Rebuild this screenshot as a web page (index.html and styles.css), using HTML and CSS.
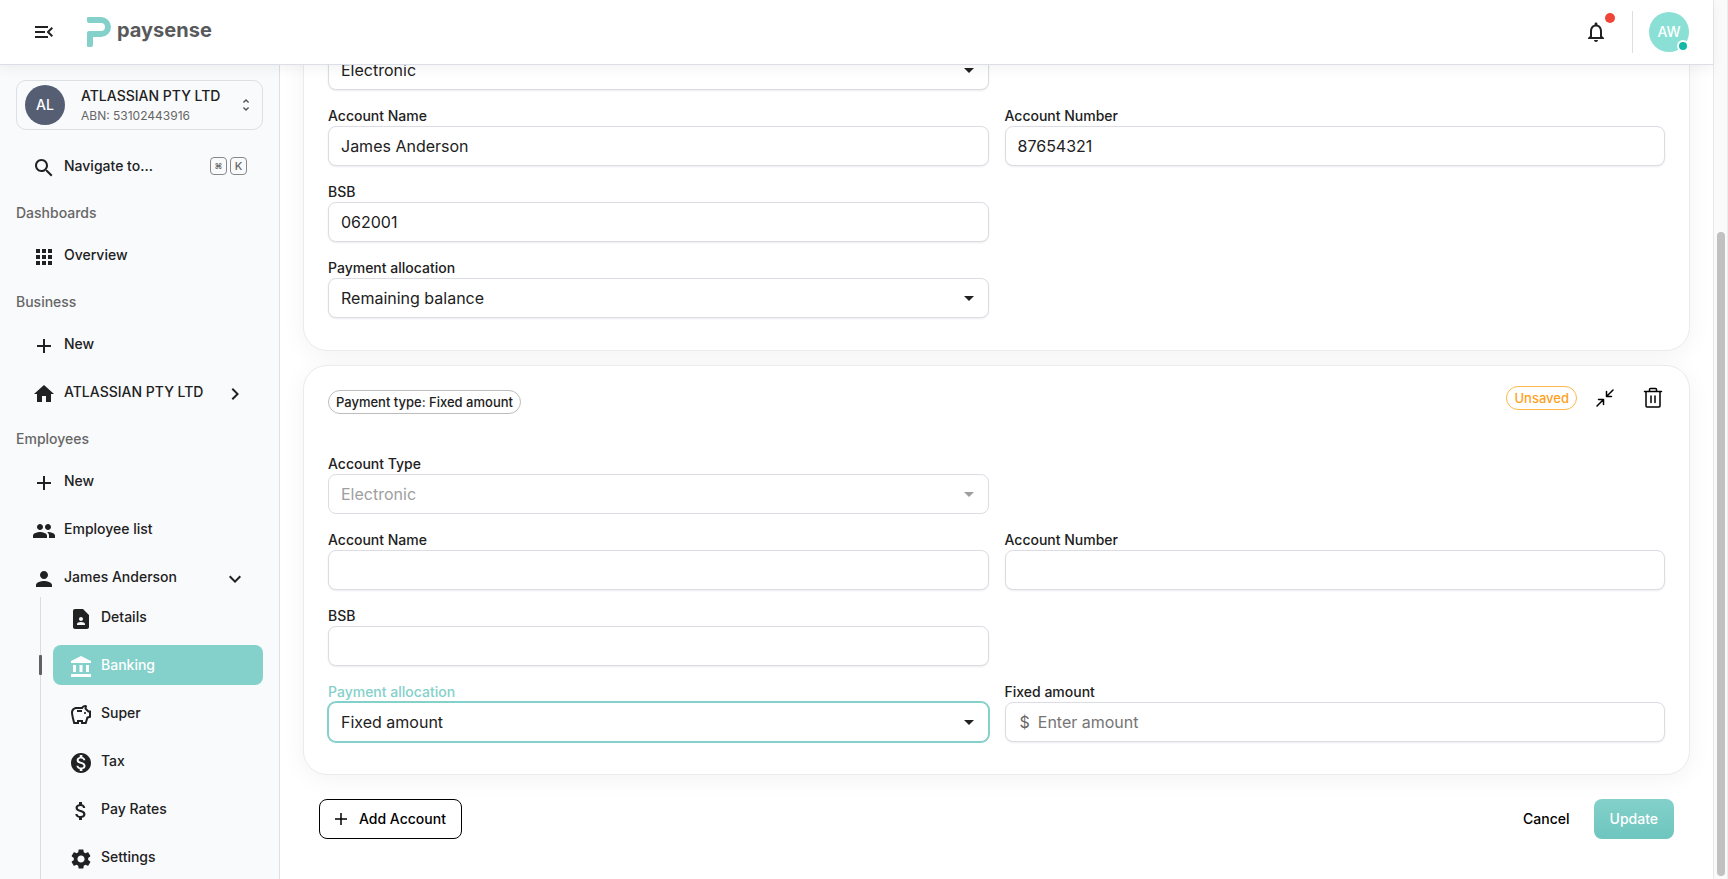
FILE: index.html
```html
<!DOCTYPE html>
<html lang="en">
<head>
    <meta charset="UTF-8">
    <meta name="viewport" content="width=device-width, initial-scale=1.0">
    <title>Banking - Paysense</title>
    <link rel="stylesheet" href="styles.css">
</head>
<body>

    <div class="app">
        <header class="topbar">
            <button type="button" class="icon-btn menu-btn" aria-label="Collapse menu">
                <svg class="icon" viewBox="0 0 24 24"><path d="M3 18h13v-2H3v2zm0-5h10v-2H3v2zm0-7v2h13V6H3zm18 9.59L17.42 12 21 8.41 19.59 7l-5 5 5 5L21 15.59z"/></svg>
            </button>
            <a href="#" class="logo">
                <svg class="logo-mark" viewBox="0 0 24 30"><path d="M1 0h13a10 10 0 0 1 0 20H6v8a2 2 0 0 1-2 2H1a1 1 0 0 1-1-1V16a2 2 0 0 1 2-2h12a4 4 0 0 0 0-8H2a2 2 0 0 1-2-2V1a1 1 0 0 1 1-1z"/></svg>
                <span>paysense</span>
            </a>

            <div class="topbar-right">
                <button type="button" class="icon-btn bell" aria-label="Notifications">
                    <svg class="icon" viewBox="0 0 24 24"><path d="M12 22c1.1 0 2-.9 2-2h-4c0 1.1.9 2 2 2zm6-6v-5c0-3.07-1.63-5.64-4.5-6.32V4c0-.83-.67-1.5-1.5-1.5s-1.5.67-1.5 1.5v.68C7.64 5.36 6 7.92 6 11v5l-2 2v1h16v-1l-2-2zm-2 1H8v-6c0-2.48 1.51-4.5 4-4.5s4 2.02 4 4.5v6z"/></svg>
                    <span class="bell-dot"></span>
                </button>
                <span class="divider"></span>
                <button type="button" class="avatar avatar-user">AW<span class="status-dot"></span></button>
            </div>
        </header>

        <div class="layout">
            <nav class="sidebar">
                <button type="button" class="org">
                    <span class="avatar avatar-org">AL</span>
                    <span class="org-text">
                        <span class="org-name">ATLASSIAN PTY LTD</span>
                        <span class="org-abn">ABN: 53102443916</span>
                    </span>
                    <svg class="icon icon-small" viewBox="0 0 24 24"><path d="M12 5.83 15.17 9l1.41-1.41L12 3 7.41 7.59 8.83 9 12 5.83zm0 12.34L8.83 15l-1.41 1.41L12 21l4.59-4.59L15.17 15 12 18.17z"/></svg>
                </button>

                <button type="button" class="nav-item search">
                    <svg class="icon" viewBox="0 0 24 24"><path d="M15.5 14h-.79l-.28-.27C15.41 12.59 16 11.11 16 9.5 16 5.91 13.09 3 9.5 3S3 5.91 3 9.5 5.91 16 9.5 16c1.61 0 3.09-.59 4.23-1.57l.27.28v.79l5 4.99L20.49 19l-4.99-5zm-6 0C7.01 14 5 11.99 5 9.5S7.01 5 9.5 5 14 7.01 14 9.5 11.99 14 9.5 14z"/></svg>
                    <span class="nav-label">Navigate to...</span>
                    <span class="keys"><kbd class="cmd">⌘</kbd><kbd>K</kbd></span>
                </button>

                <h2>Dashboards</h2>
                <ul>
                    <li><a href="#" class="nav-item">
                        <svg class="icon" viewBox="0 0 24 24"><path d="M4 8h4V4H4v4zm6 12h4v-4h-4v4zm-6 0h4v-4H4v4zm0-6h4v-4H4v4zm6 0h4v-4h-4v4zm6-10v4h4V4h-4zm-6 4h4V4h-4v4zm6 6h4v-4h-4v4zm0 6h4v-4h-4v4z"/></svg>
                        <span class="nav-label">Overview</span>
                    </a></li>
                </ul>

                <h2>Business</h2>
                <ul>
                    <li><a href="#" class="nav-item">
                        <svg class="icon" viewBox="0 0 24 24"><path d="M19 13h-6v6h-2v-6H5v-2h6V5h2v6h6v2z"/></svg>
                        <span class="nav-label">New</span>
                    </a></li>
                    <li><a href="#" class="nav-item">
                        <svg class="icon" viewBox="0 0 24 24"><path d="M10 20v-6h4v6h5v-8h3L12 3 2 12h3v8z"/></svg>
                        <span class="nav-label">ATLASSIAN PTY LTD</span>
                        <svg class="icon" viewBox="0 0 24 24"><path d="M10 6 8.59 7.41 13.17 12l-4.58 4.59L10 18l6-6z"/></svg>
                    </a></li>
                </ul>

                <h2>Employees</h2>
                <ul>
                    <li><a href="#" class="nav-item">
                        <svg class="icon" viewBox="0 0 24 24"><path d="M19 13h-6v6h-2v-6H5v-2h6V5h2v6h6v2z"/></svg>
                        <span class="nav-label">New</span>
                    </a></li>
                    <li><a href="#" class="nav-item">
                        <svg class="icon" viewBox="0 0 24 24"><path d="M16 11c1.66 0 2.99-1.34 2.99-3S17.66 5 16 5s-3 1.34-3 3 1.34 3 3 3zm-8 0c1.66 0 2.99-1.34 2.99-3S9.66 5 8 5 5 6.34 5 8s1.34 3 3 3zm0 2c-2.33 0-7 1.17-7 3.5V19h14v-2.5c0-2.33-4.67-3.5-7-3.5zm8 0c-.29 0-.62.02-.97.05 1.16.84 1.97 1.97 1.97 3.45V19h6v-2.5c0-2.33-4.67-3.5-7-3.5z"/></svg>
                        <span class="nav-label">Employee list</span>
                    </a></li>
                    <li>
                        <a href="#" class="nav-item">
                            <svg class="icon" viewBox="0 0 24 24"><path d="M12 12c2.21 0 4-1.79 4-4s-1.79-4-4-4-4 1.79-4 4 1.79 4 4 4zm0 2c-2.67 0-8 1.34-8 4v2h16v-2c0-2.66-5.33-4-8-4z"/></svg>
                            <span class="nav-label">James Anderson</span>
                            <svg class="icon" viewBox="0 0 24 24"><path d="M16.59 8.59 12 13.17 7.41 8.59 6 10l6 6 6-6z"/></svg>
                        </a>
                        <ul class="subnav">
                            <li><a href="#" class="nav-item">
                                <svg class="icon" viewBox="0 0 24 24"><path fill-rule="evenodd" d="M14 2H6c-1.1 0-2 .9-2 2v16c0 1.1.9 2 2 2h12c1.1 0 2-.9 2-2V8l-6-6zm-2 8c1.1 0 2 .9 2 2s-.9 2-2 2-2-.9-2-2 .9-2 2-2zm4 8H8v-.57c0-.81.48-1.53 1.22-1.85.85-.37 1.79-.58 2.78-.58s1.93.21 2.78.58c.74.32 1.22 1.04 1.22 1.85V18z"/></svg>
                                <span class="nav-label">Details</span>
                            </a></li>
                            <li><a href="#" class="nav-item active">
                                <svg class="icon" viewBox="0 0 24 24"><path d="M4 10v7h3v-7H4zm6.500 0v7h3v-7h-3zM2 22h20v-3H2v3zm15-12v7h3v-7h-3zm-5-9L2 6v2h20V6L12 1z"/></svg>
                                <span class="nav-label">Banking</span>
                            </a></li>
                            <li><a href="#" class="nav-item">
                                <svg class="icon" viewBox="0 0 24 24"><path d="M15 10c0-.55.45-1 1-1s1 .45 1 1-.45 1-1 1-1-.45-1-1zM8 9h5V7H8v2zm14-1.500v6.970l-2.820.940L17.500 21H12v-2h-2v2H4.500C4.500 21 2 12.540 2 9.500 2 6.460 4.460 4 7.500 4h5c.910-1.210 2.360-2 4-2 .830 0 1.500.670 1.500 1.500 0 .210-.040.410-.120.590-.140.340-.260.730-.320 1.150l2.270 2.270H22zm-2 2h-1L15.500 6c0-.650.090-1.290.260-1.910-.970.250-1.760.970-2.090 1.910H7.500C5.570 6 4 7.570 4 9.500c0 1.880 1.220 6.650 2.010 9.500H8v-2h6v2h2.010l1.550-5.150 2.440-.820V9.500z"/></svg>
                                <span class="nav-label">Super</span>
                            </a></li>
                            <li><a href="#" class="nav-item">
                                <svg class="icon" viewBox="0 0 24 24"><path d="M12 2C6.480 2 2 6.480 2 12s4.480 10 10 10 10-4.480 10-10S17.520 2 12 2zm1.410 16.090V20h-2.670v-1.930c-1.710-.360-3.160-1.460-3.270-3.400h1.960c.1 1.050.820 1.870 2.650 1.870 1.960 0 2.400-.980 2.400-1.590 0-.830-.440-1.610-2.670-2.140-2.480-.6-4.180-1.620-4.180-3.670 0-1.720 1.390-2.840 3.110-3.210V4h2.670v1.950c1.860.450 2.790 1.860 2.850 3.390H14.300c-.050-1.110-.640-1.870-2.220-1.870-1.500 0-2.400.680-2.400 1.640 0 .840.650 1.390 2.670 1.910s4.180 1.390 4.180 3.910c-.010 1.830-1.380 2.830-3.120 3.160z"/></svg>
                                <span class="nav-label">Tax</span>
                            </a></li>
                            <li><a href="#" class="nav-item">
                                <svg class="icon" viewBox="0 0 24 24"><path d="M11.800 10.900c-2.270-.590-3-1.200-3-2.150 0-1.090 1.010-1.850 2.700-1.850 1.780 0 2.440.850 2.500 2.100h2.210c-.070-1.720-1.120-3.300-3.210-3.810V3h-3v2.160c-1.940.420-3.500 1.680-3.500 3.610 0 2.310 1.910 3.460 4.700 4.130 2.500.600 3 1.480 3 2.410 0 .690-.490 1.790-2.700 1.790-2.060 0-2.870-.920-2.980-2.100h-2.200c.120 2.190 1.760 3.420 3.680 3.830V21h3v-2.150c1.950-.370 3.500-1.500 3.500-3.550 0-2.840-2.430-3.810-4.700-4.400z"/></svg>
                                <span class="nav-label">Pay Rates</span>
                            </a></li>
                            <li><a href="#" class="nav-item">
                                <svg class="icon" viewBox="0 0 24 24"><path d="M19.140 12.940c.04-.3.06-.61.06-.94 0-.32-.02-.64-.07-.94l2.030-1.580c.18-.14.23-.41.12-.61l-1.920-3.320c-.12-.22-.37-.29-.59-.22l-2.390.96c-.5-.38-1.030-.7-1.620-.94l-.36-2.540c-.04-.24-.24-.41-.48-.41h-3.840c-.24 0-.43.17-.47.41l-.36 2.540c-.59.24-1.130.57-1.620.94l-2.390-.96c-.22-.08-.47 0-.59.22L2.740 8.870c-.12.21-.08.47.12.61l2.030 1.580c-.05.3-.09.63-.09.94s.02.64.07.94l-2.030 1.580c-.18.14-.23.41-.12.61l1.920 3.320c.12.22.37.29.59.22l2.390-.96c.5.38 1.030.7 1.620.94l.36 2.540c.05.24.24.41.48.41h3.840c.24 0 .44-.17.47-.41l.36-2.540c.59-.24 1.130-.56 1.620-.94l2.390.96c.22.08.47 0 .59-.22l1.920-3.320c.12-.22.07-.47-.12-.61l-2.010-1.580zM12 15.600c-1.980 0-3.600-1.620-3.600-3.600s1.620-3.600 3.600-3.600 3.600 1.620 3.600 3.600-1.620 3.600-3.600 3.600z"/></svg>
                                <span class="nav-label">Settings</span>
                            </a></li>
                        </ul>
                    </li>
                </ul>
            </nav>

            <main class="content">
                <section class="card">
                    <div class="fields">
                        <div class="field">
                            <div class="select">
                                <select id="type-1" aria-label="Account type"><option>Electronic</option></select>
                                <svg class="icon caret" viewBox="0 0 24 24"><path d="m7 10 5 5 5-5z"/></svg>
                            </div>
                        </div>
                        <div class="field new-row">
                            <label for="name-1">Account Name</label>
                            <input type="text" id="name-1" value="James Anderson">
                        </div>
                        <div class="field">
                            <label for="number-1">Account Number</label>
                            <input type="text" id="number-1" value="87654321">
                        </div>
                        <div class="field">
                            <label for="bsb-1">BSB</label>
                            <input type="text" id="bsb-1" value="062001">
                        </div>
                        <div class="field new-row">
                            <label for="allocation-1">Payment allocation</label>
                            <div class="select">
                                <select id="allocation-1"><option>Remaining balance</option></select>
                                <svg class="icon caret" viewBox="0 0 24 24"><path d="m7 10 5 5 5-5z"/></svg>
                            </div>
                        </div>
                    </div>
                </section>

                <section class="card">
                    <div class="card-header">
                        <span class="chip chip-type">Payment type: Fixed amount</span>
                        <div class="card-actions">
                            <span class="chip chip-warning">Unsaved</span>
                            <button type="button" class="icon-btn" aria-label="Collapse">
                                <svg class="icon line" viewBox="0 0 24 24"><path d="M4 20l6.500-6.500M5.500 13.500h5v5M20 4l-6.500 6.500M13.500 5.500v5h5"/></svg>
                            </button>
                            <button type="button" class="icon-btn" aria-label="Delete account">
                                <svg class="icon line" viewBox="0 0 24 24"><path d="M3.500 5.500h17M8.500 5V3.500a1 1 0 0 1 1-1h5a1 1 0 0 1 1 1V5M5 6v14a1 1 0 0 0 1 1h12a1 1 0 0 0 1-1V6M10 10v6.500M14 10v6.500"/></svg>
                            </button>
                        </div>
                    </div>
                    <div class="fields">
                        <div class="field">
                            <label for="type-2">Account Type</label>
                            <div class="select">
                                <select id="type-2" disabled><option>Electronic</option></select>
                                <svg class="icon caret" viewBox="0 0 24 24"><path d="m7 10 5 5 5-5z"/></svg>
                            </div>
                        </div>
                        <div class="field new-row">
                            <label for="name-2">Account Name</label>
                            <input type="text" id="name-2">
                        </div>
                        <div class="field">
                            <label for="number-2">Account Number</label>
                            <input type="text" id="number-2">
                        </div>
                        <div class="field">
                            <label for="bsb-2">BSB</label>
                            <input type="text" id="bsb-2">
                        </div>
                        <div class="field new-row focused">
                            <label for="allocation-2">Payment allocation</label>
                            <div class="select">
                                <select id="allocation-2"><option>Fixed amount</option></select>
                                <svg class="icon caret" viewBox="0 0 24 24"><path d="m7 10 5 5 5-5z"/></svg>
                            </div>
                        </div>
                        <div class="field">
                            <label for="amount-2">Fixed amount</label>
                            <div class="money">
                                <span>$</span>
                                <input type="text" id="amount-2" placeholder="Enter amount">
                            </div>
                        </div>
                    </div>
                </section>

                <div class="form-actions">
                    <button type="button" class="btn btn-outline">
                        <svg class="icon icon-add" viewBox="0 0 20 20"><path d="M10 4v12M4 10h12"/></svg>
                        Add Account
                    </button>
                    <button type="button" class="btn btn-text">Cancel</button>
                    <button type="submit" class="btn btn-primary">Update</button>
                </div>
            </main>
        </div>
    </div>

    <div class="scrollbar"><div class="thumb"></div></div>

</body>
</html>
```
FILE: styles.css
```css
* {
    box-sizing: border-box;
}

body {
    margin: 0;
    height: 100vh;
    display: flex;
    overflow: hidden;
    font-family: Inter, "Liberation Sans", sans-serif;
    font-size: 14px;
    line-height: 20px;
    color: #212121;
    background: #fff;
}

button, input, select {
    font: inherit;
    color: inherit;
}

button {
    padding: 0;
    border: none;
    background: none;
    cursor: pointer;
}

a {
    color: inherit;
    text-decoration: none;
}

ul {
    list-style: none;
    margin: 0;
    padding: 0;
}

.icon {
    width: 24px;
    height: 24px;
    flex: none;
    fill: currentColor;
}

.icon-small {
    width: 16px;
    height: 16px;
    color: #555;
}

.line {
    fill: none;
    stroke: #000;
    stroke-width: 1.5;
    stroke-linecap: round;
    stroke-linejoin: round;
}

.icon-btn {
    position: relative;
    display: flex;
    align-items: center;
    justify-content: center;
    width: 40px;
    height: 40px;
}

.app {
    flex: 1;
    min-width: 0;
    display: flex;
    flex-direction: column;
}

/* Top bar */
.topbar {
    position: relative;
    z-index: 1;
    flex: none;
    height: 65px;
    padding: 0 24px;
    display: flex;
    align-items: center;
    background: #fff;
    border-bottom: 1px solid #dcdfe8;
    box-shadow: 0 4px 12px rgba(0, 0, 0, 0.05);
}

.logo {
    display: flex;
    gap: 6px;
    margin-left: 23px;
    color: #58595b;
    font-size: 20px;
    font-weight: 700;
    line-height: 26px;
}

.logo-mark {
    width: 24px;
    height: 30px;
    fill: #84d0ca;
}

.topbar-right {
    display: flex;
    align-items: center;
    gap: 16px;
    margin-left: auto;
}

.bell-dot {
    position: absolute;
    top: 1px;
    right: 1px;
    width: 10px;
    height: 10px;
    border-radius: 50%;
    background: #f04438;
}

.divider {
    width: 1px;
    height: 42px;
    background: #dcdfe6;
}

.avatar {
    position: relative;
    flex: none;
    display: flex;
    align-items: center;
    justify-content: center;
    width: 40px;
    height: 40px;
    border-radius: 50%;
    color: #fff;
    font-weight: 500;
}

.avatar-user {
    background: #8ae0d4;
}

.avatar-org {
    background: #565e74;
}

.status-dot {
    position: absolute;
    right: 0;
    bottom: 0;
    width: 12px;
    height: 12px;
    border: 2px solid #fff;
    border-radius: 50%;
    background: #14b8a6;
}

.layout {
    flex: 1;
    min-height: 0;
    display: flex;
}

/* Sidebar */
.sidebar {
    flex: none;
    width: 280px;
    padding: 15px 16px 0;
    overflow: hidden;
    background: #f9fafc;
    border-right: 1px solid #dcdfe3;
}

.org {
    display: flex;
    align-items: center;
    width: 100%;
    height: 50px;
    padding: 0 8px;
    border: 1px solid #dcdfe3;
    border-radius: 10px;
    text-align: left;
}

.org-text {
    flex: 1;
    display: flex;
    flex-direction: column;
    margin-left: 16px;
    padding-top: 2px;
}

.org-name {
    font-weight: 500;
}

.org-abn {
    font-size: 12px;
    color: #666;
}

.nav-item {
    display: flex;
    align-items: center;
    gap: 8px;
    width: 100%;
    height: 40px;
    padding: 0 16px;
    border-radius: 8px;
    font-weight: 500;
    text-align: left;
}

.nav-item .icon {
    margin-top: 4px;
}

.nav-label {
    flex: 1;
}

.search {
    margin-top: 16px;
}

.keys {
    display: flex;
    gap: 3px;
}

kbd {
    width: 17px;
    height: 18px;
    border: 1px solid #888;
    border-radius: 4px;
    font-family: inherit;
    font-size: 11px;
    line-height: 16px;
    text-align: center;
    color: #666;
}

.cmd {
    font-size: 8px;
}

.sidebar h2 {
    margin: 17px 0 12px;
    font-size: 14px;
    font-weight: 500;
    line-height: 20px;
    color: #666;
}

.sidebar li + li {
    margin-top: 8px;
}

.subnav {
    margin-left: 24px;
    padding: 0 0 16px 12px;
    border-left: 1px solid #dcdcdc;
}

.subnav li {
    position: relative;
}

.sidebar .subnav li + li {
    margin-top: 0;
    padding-top: 8px;
}

.active {
    color: #fff;
    background: #84d0ca;
}

.active::before {
    content: "";
    position: absolute;
    left: -14px;
    bottom: 10px;
    width: 3px;
    height: 20px;
    border-radius: 1px;
    background: #616161;
}

/* Banking form */
.content {
    flex: 1;
    min-width: 0;
    display: flex;
    flex-direction: column;
    justify-content: flex-end;
    padding: 0 23px 40px;
    overflow: hidden;
}

.card {
    margin-bottom: 14px;
    padding: 12px 24px 32px;
    background: #fff;
    border: 1px solid #ebebeb;
    border-radius: 24px;
    box-shadow: 0 4px 24px rgba(0, 0, 0, 0.05);
}

/* first card runs up under the top bar */
.card:first-child {
    padding-top: 72px;
}

.card-header {
    display: flex;
    align-items: center;
    justify-content: space-between;
    margin-bottom: 36px;
}

.card-actions {
    display: flex;
    align-items: center;
    gap: 8px;
    margin-right: -8px;
}

.chip {
    height: 24px;
    padding: 0 7px;
    border: 1px solid #bdbdbd;
    border-radius: 12px;
    font-size: 13px;
    font-weight: 500;
    line-height: 22px;
}

.chip-type {
    margin-top: 8px;
}

.chip-warning {
    color: #ff9f1c;
    border-color: #ffb74d;
}

.fields {
    display: grid;
    grid-template-columns: 1fr 1fr;
    gap: 16px;
}

.new-row {
    grid-column: 1;
}

.field label {
    display: block;
    font-weight: 500;
}

.field input, .field select, .money {
    display: block;
    width: 100%;
    height: 40px;
    padding: 0 12px;
    border: 1px solid #dcdde4;
    border-radius: 8px;
    background: #fff;
    font-size: 16px;
    outline: none;
    box-shadow: 0 1px 2px rgba(0, 0, 0, 0.08);
}

.select {
    position: relative;
}

.field select {
    appearance: none;
    opacity: 1;
}

.field select:disabled {
    color: #9e9e9e;
    box-shadow: none;
}

.caret {
    position: absolute;
    top: 8px;
    right: 8px;
    pointer-events: none;
}

select:disabled + .caret {
    color: #9e9e9e;
}

.focused label {
    color: #84d0ca;
}

.field.focused select {
    border-color: #84d0ca;
    box-shadow: 0 0 0 1px #84d0ca;
}

.money {
    display: flex;
    align-items: center;
    gap: 8px;
    padding-left: 14px;
    color: #666;
}

.field .money input {
    flex: 1;
    height: 100%;
    padding: 0;
    border: none;
    background: none;
    box-shadow: none;
}

.money input::placeholder {
    color: #757575;
}

.form-actions {
    display: flex;
    gap: 8px;
    margin-top: 10px;
    padding: 0 16px;
}

.btn {
    display: flex;
    align-items: center;
    justify-content: center;
    height: 40px;
    padding: 0 16px;
    border-radius: 8px;
    font-weight: 500;
    color: #000;
}

.btn-outline {
    gap: 8px;
    padding: 0 15px 0 11px;
    border: 1px solid #000;
    margin-right: auto;
}

.icon-add {
    width: 20px;
    height: 20px;
    stroke: #000;
    stroke-width: 1.5;
}

.btn-primary {
    color: #fff;
    background: linear-gradient(#84d0ca, #6dc6bf);
}

/* Page scrollbar */
.scrollbar {
    flex: none;
    display: flex;
    flex-direction: column;
    justify-content: flex-end;
    width: 15px;
    padding: 0 3px 3px;
    background: #fafafa;
    border-left: 1px solid #e8e8e8;
    border-right: 1px solid #ececec;
}

.thumb {
    height: 73.5%;
    width: 8px;
    border-radius: 4px;
    background: #c1c1c1;
}
```
